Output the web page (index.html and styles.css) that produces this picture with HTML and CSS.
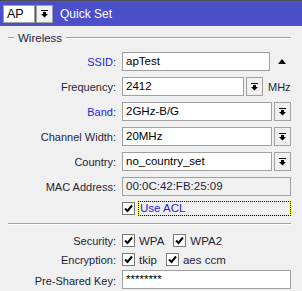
FILE: index.html
```html
<!DOCTYPE html>
<html lang="en">
<head>
  <meta charset="UTF-8">
  <title>Quick Set</title>
  <link rel="stylesheet" href="styles.css">
</head>
<body>

<div class="titlebar">
  <div class="combo">
    <span class="combo-text">AP</span>
    <span class="drop-btn"><svg width="7" height="8" viewBox="0 0 7 8"><rect x="0" y="0" width="7" height="1"/><rect x="2" y="2" width="3" height="2"/><polygon points="0,4 7,4 3.5,7.5"/></svg></span>
  </div>
  <span class="title">Quick Set</span>
</div>

<div class="panel">
  <div class="legend"><span>Wireless</span></div>

  <div class="form">
    <label class="lbl blue">SSID:</label>
    <div class="ctrl">
      <span class="field grow">apTest</span>
      <span class="up-arrow"><svg width="8" height="5" viewBox="0 0 8 5"><polygon points="0,5 8,5 4,0"/></svg></span>
    </div>

    <label class="lbl">Frequency:</label>
    <div class="ctrl">
      <span class="field freq">2412</span>
      <span class="drop-btn"><svg width="7" height="8" viewBox="0 0 7 8"><rect x="0" y="0" width="7" height="1"/><rect x="2" y="2" width="3" height="2"/><polygon points="0,4 7,4 3.5,7.5"/></svg></span>
      <span class="unit">MHz</span>
    </div>

    <label class="lbl blue">Band:</label>
    <div class="ctrl">
      <span class="field grow">2GHz-B/G</span>
      <span class="drop-btn"><svg width="7" height="8" viewBox="0 0 7 8"><rect x="0" y="0" width="7" height="1"/><rect x="2" y="2" width="3" height="2"/><polygon points="0,4 7,4 3.5,7.5"/></svg></span>
    </div>

    <label class="lbl">Channel Width:</label>
    <div class="ctrl">
      <span class="field grow">20MHz</span>
      <span class="drop-btn"><svg width="7" height="8" viewBox="0 0 7 8"><rect x="0" y="0" width="7" height="1"/><rect x="2" y="2" width="3" height="2"/><polygon points="0,4 7,4 3.5,7.5"/></svg></span>
    </div>

    <label class="lbl">Country:</label>
    <div class="ctrl">
      <span class="field grow">no_country_set</span>
      <span class="drop-btn"><svg width="7" height="8" viewBox="0 0 7 8"><rect x="0" y="0" width="7" height="1"/><rect x="2" y="2" width="3" height="2"/><polygon points="0,4 7,4 3.5,7.5"/></svg></span>
    </div>

    <label class="lbl">MAC Address:</label>
    <div class="ctrl">
      <span class="field grow readonly">00:0C:42:FB:25:09</span>
    </div>

    <span></span>
    <div class="ctrl acl">
      <span class="cb"><svg width="11" height="11" viewBox="0 0 11 11"><polyline points="2,5.5 4.5,8 9,2.5" fill="none" stroke="#000" stroke-width="2"/></svg></span>
      <span class="focus">Use ACL</span>
    </div>
  </div>

  <div class="sep"></div>

  <div class="form sec">
    <label class="lbl">Security:</label>
    <div class="ctrl checks">
      <span class="cb"><svg width="11" height="11" viewBox="0 0 11 11"><polyline points="2,5.5 4.5,8 9,2.5" fill="none" stroke="#000" stroke-width="2"/></svg></span>
      <span class="opt">WPA</span>
      <span class="cb"><svg width="11" height="11" viewBox="0 0 11 11"><polyline points="2,5.5 4.5,8 9,2.5" fill="none" stroke="#000" stroke-width="2"/></svg></span>
      <span class="opt">WPA2</span>
    </div>

    <label class="lbl">Encryption:</label>
    <div class="ctrl checks">
      <span class="cb"><svg width="11" height="11" viewBox="0 0 11 11"><polyline points="2,5.5 4.5,8 9,2.5" fill="none" stroke="#000" stroke-width="2"/></svg></span>
      <span class="opt">tkip</span>
      <span class="cb"><svg width="11" height="11" viewBox="0 0 11 11"><polyline points="2,5.5 4.5,8 9,2.5" fill="none" stroke="#000" stroke-width="2"/></svg></span>
      <span class="opt">aes ccm</span>
    </div>

    <label class="lbl">Pre-Shared Key:</label>
    <div class="ctrl key">
      <span class="field grow">********</span>
    </div>
  </div>
</div>

</body>
</html>
```

FILE: styles.css
```css
body {
  margin: 0;
  width: 302px;
  height: 291px;
  overflow: hidden;
  background-color: #f0f0f0;
  color: #1e1e3c;
  font-family: "Liberation Sans", Arial, sans-serif;
  font-size: 11px;
}
.titlebar {
  display: flex;
  align-items: center;
  gap: 7px;
  height: 25px;
  padding-left: 3px;
  border-top: 1px solid #505050;
  background-color: #4b4fc9;
}
.combo {
  display: flex;
  gap: 1px;
}
.combo-text {
  width: 27px;
  height: 16px;
  padding-left: 3px;
  line-height: 16px;
  background-color: #fff;
  border: 1px solid #a0a0a0;
  color: #000;
  font-size: 12.5px;
}
.title {
  color: #fff;
  font-size: 12px;
}
.drop-btn {
  display: flex;
  align-items: center;
  justify-content: center;
  width: 15px;
  height: 16px;
  background-color: #f0f0f0;
  border: 1px solid #a0a0a0;
}
.panel {
  padding: 0 11px 0 8px;
}
.legend {
  display: flex;
  align-items: center;
  height: 14px;
  margin-top: 5px;
}
.legend::before,
.legend::after {
  content: "";
  border-top: 1px solid #a0a0a0;
  border-bottom: 1px solid #fff;
}
.legend::before {
  width: 6px;
}
.legend::after {
  flex: 1;
}
.legend span {
  margin: 0 4px;
  font-size: 11.5px;
}
.form {
  display: grid;
  grid-template-columns: 108px 1fr;
  column-gap: 6px;
  row-gap: 6px;
  margin-top: 7px;
  align-items: center;
}
.lbl {
  text-align: right;
}
.blue {
  color: #1c1ce6;
}
.ctrl {
  display: flex;
  align-items: center;
  gap: 2px;
  height: 19px;
}
.field {
  height: 17px;
  line-height: 17px;
  padding-left: 3px;
  background-color: #fff;
  border: 1px solid #a0a0a0;
  color: #000;
  font-size: 11.5px;
  box-sizing: content-box;
}
.field.grow {
  flex: 1;
}
.field.freq {
  width: 117px;
}
.field.readonly {
  background-color: #f0f0f0;
  color: #1e1e3c;
}
.ctrl .drop-btn {
  height: 17px;
}
.up-arrow {
  display: flex;
  justify-content: center;
  width: 19px;
}
.unit {
  margin-left: 3px;
}
.ctrl.acl {
  height: 15px;
  gap: 3px;
  margin-top: -1px;
}
.cb {
  display: flex;
  align-items: center;
  justify-content: center;
  width: 11px;
  height: 11px;
  background-color: #fff;
  border: 1px solid #7a7a7a;
}
.focus {
  flex: 1;
  height: 13px;
  line-height: 13px;
  padding-left: 1px;
  color: #1c1ce6;
  font-size: 11.5px;
  border: 1px dotted #000;
  background: linear-gradient(#f0f0f0, #f0f0f0) padding-box, #f5f500 border-box;
}
.sep {
  margin-top: 7px;
  border-top: 1px solid #a0a0a0;
  border-bottom: 1px solid #fff;
}
.form.sec {
  margin-top: 9px;
  row-gap: 6px;
}
.ctrl.checks {
  height: 13px;
  gap: 4px;
}
.opt {
  margin-right: 5px;
  font-size: 11.5px;
}
.ctrl.key {
  margin-top: -2px;
}
```
